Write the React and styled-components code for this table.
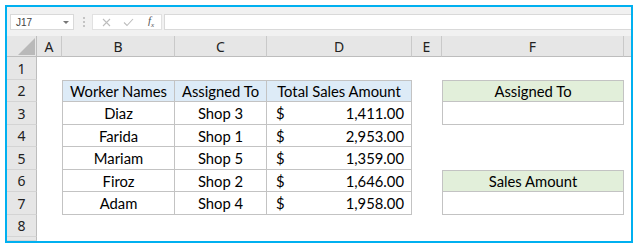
import React from "react";
import styled, { createGlobalStyle } from "styled-components";

const Global = createGlobalStyle`
  html, body { margin: 0; padding: 0; background: #ffffff; }
  * { box-sizing: border-box; }
`;

const Frame = styled.div`
  margin: 5px 0 0 5px;
  width: 628px;
  height: 238px;
  border: 2px solid #00b0f0;
  background: #f1f1f1;
  display: flex;
  flex-direction: column;
  overflow: hidden;
`;

const FormulaBar = styled.div`
  height: 29px;
  flex: none;
  display: flex;
  align-items: flex-start;
  padding: 7px 0 0 3px;
  background: #f1f1f1;
`;

const NameBox = styled.div`
  width: 64px;
  height: 16px;
  background: #fff;
  border: 1px solid #d9d9d9;
  display: flex;
  align-items: center;
  justify-content: space-between;
  padding: 0 4px 0 5px;
  font-family: "Liberation Sans", Arial, sans-serif;
  font-size: 10px;
  color: #444;
`;

const Caret = styled.span`
  width: 0;
  height: 0;
  border-left: 3px solid transparent;
  border-right: 3px solid transparent;
  border-top: 3px solid #777;
`;

const Grip = styled.div`
  width: 2px;
  height: 10px;
  margin: 3px 7px 0 9px;
  background: repeating-linear-gradient(to bottom, #c4c4c4 0 2px, transparent 2px 4px);
`;

const FxBox = styled.div`
  width: 70px;
  height: 16px;
  background: #fff;
  border: 1px solid #e1e1e1;
  display: flex;
  align-items: center;
  padding: 0 0 0 9px;
  gap: 12px;
`;

const Fx = styled.span`
  font-family: "Liberation Serif", serif;
  font-style: italic;
  font-size: 11px;
  color: #555;
  margin-left: 2px;
  & sub { font-size: 7px; }
`;

const Input = styled.div`
  flex: 1;
  height: 16px;
  margin-left: 2px;
  background: #fff;
  border: 1px solid #d9d9d9;
  border-right: none;
`;

const Sheet = styled.div`
  flex: 1;
  display: grid;
  grid-template-columns: 30px 25px 113px 92px 145px 30px 182px 1fr;
  grid-template-rows: 21px 23px 22px 23px 22px 23px 22px 23px 22px 1fr;
  background: #fff;
`;

const Corner = styled.div`
  background: #e6e6e6;
  border-right: 1px solid #bdbdbd;
  border-bottom: 1px solid #bdbdbd;
  position: relative;
  & svg { position: absolute; left: 0; top: 0; }
`;

const ColHead = styled.div`
  background: #e6e6e6;
  border-right: ${(p) => (p.$last ? "none" : "1px solid #c9c9c9")};
  border-bottom: 1px solid #bdbdbd;
  display: flex;
  align-items: center;
  justify-content: center;
  font-family: "Noto Sans", "Open Sans", sans-serif;
  font-size: 14px;
  color: #222;
  padding-top: 1px;
`;

const RowHead = styled.div`
  background: #e6e6e6;
  border-right: 1px solid #bdbdbd;
  border-bottom: 1px solid #d4d4d4;
  display: flex;
  align-items: center;
  justify-content: center;
  font-family: "Noto Sans", "Open Sans", sans-serif;
  font-size: 14px;
  color: #222;
`;

const Cell = styled.div`
  background: ${(p) => p.$bg || "#fff"};
  border-right: ${(p) => (p.$boxed ? "1px solid #c3c3c3" : "none")};
  border-bottom: ${(p) => (p.$boxed ? "1px solid #c3c3c3" : "none")};
  border-top: ${(p) => (p.$top ? "1px solid #c3c3c3" : "none")};
  border-left: ${(p) => (p.$left ? "1px solid #c3c3c3" : "none")};
  display: flex;
  align-items: center;
  justify-content: ${(p) => p.$justify || "center"};
  padding: ${(p) => p.$pad || "0"};
  font-family: Lato, "Open Sans", sans-serif;
  font-size: 14.8px;
  color: #000;
  white-space: nowrap;
`;

const BLUE = "#ddebf7";
const GREEN = "#e2efda";

const cols = ["A", "B", "C", "D", "E", "F"];
const data = [
  ["Diaz", "Shop 3", "1,411.00"],
  ["Farida", "Shop 1", "2,953.00"],
  ["Mariam", "Shop 5", "1,359.00"],
  ["Firoz", "Shop 2", "1,646.00"],
  ["Adam", "Shop 4", "1,958.00"],
];

function Row({ n, children }) {
  return (
    <>
      <RowHead>{n}</RowHead>
      {children}
    </>
  );
}

export default function App() {
  const side = (r) => {
    if (r === 2) return <Cell $bg={GREEN} $boxed $top $left>Assigned To</Cell>;
    if (r === 3) return <Cell $boxed $left />;
    if (r === 6) return <Cell $bg={GREEN} $boxed $top $left>Sales Amount</Cell>;
    if (r === 7) return <Cell $boxed $left />;
    return <Cell />;
  };

  return (
    <>
      <Global />
      <Frame>
        <FormulaBar>
          <NameBox>
            J17
            <Caret />
          </NameBox>
          <Grip />
          <FxBox>
            <svg width="9" height="9" viewBox="0 0 9 9">
              <path d="M1 1 L8 8 M8 1 L1 8" stroke="#bdbdbd" strokeWidth="1.1" />
            </svg>
            <svg width="11" height="9" viewBox="0 0 11 9">
              <path d="M1 4.5 L4 7.5 L10 1" stroke="#bdbdbd" strokeWidth="1.1" fill="none" />
            </svg>
            <Fx>
              f<sub>x</sub>
            </Fx>
          </FxBox>
          <Input />
        </FormulaBar>
        <Sheet>
          <Corner>
            <svg width="30" height="21" viewBox="0 0 30 21">
              <polygon points="28,2 28,19 11,19" fill="#b9b9b9" />
            </svg>
          </Corner>
          {cols.map((c) => (
            <ColHead key={c}>{c}</ColHead>
          ))}
          <ColHead $last />

          <Row n={1}>
            <Cell /><Cell /><Cell /><Cell /><Cell /><Cell /><Cell />
          </Row>
          <Row n={2}>
            <Cell />
            <Cell $bg={BLUE} $boxed $top $left>Worker Names</Cell>
            <Cell $bg={BLUE} $boxed $top>Assigned To</Cell>
            <Cell $bg={BLUE} $boxed $top>Total Sales Amount</Cell>
            <Cell />
            {side(2)}
            <Cell />
          </Row>
          {data.map((d, i) => (
            <Row n={i + 3} key={d[0]}>
              <Cell />
              <Cell $boxed $left>{d[0]}</Cell>
              <Cell $boxed>{d[1]}</Cell>
              <Cell $boxed $justify="space-between" $pad="0 7px 0 9px">
                <span>$</span>
                <span>{d[2]}</span>
              </Cell>
              <Cell />
              {side(i + 3)}
              <Cell />
            </Row>
          ))}
          <Row n={8}>
            <Cell /><Cell /><Cell /><Cell /><Cell /><Cell /><Cell />
          </Row>
          <Row n="">
            <Cell /><Cell /><Cell /><Cell /><Cell /><Cell /><Cell />
          </Row>
        </Sheet>
      </Frame>
    </>
  );
}
